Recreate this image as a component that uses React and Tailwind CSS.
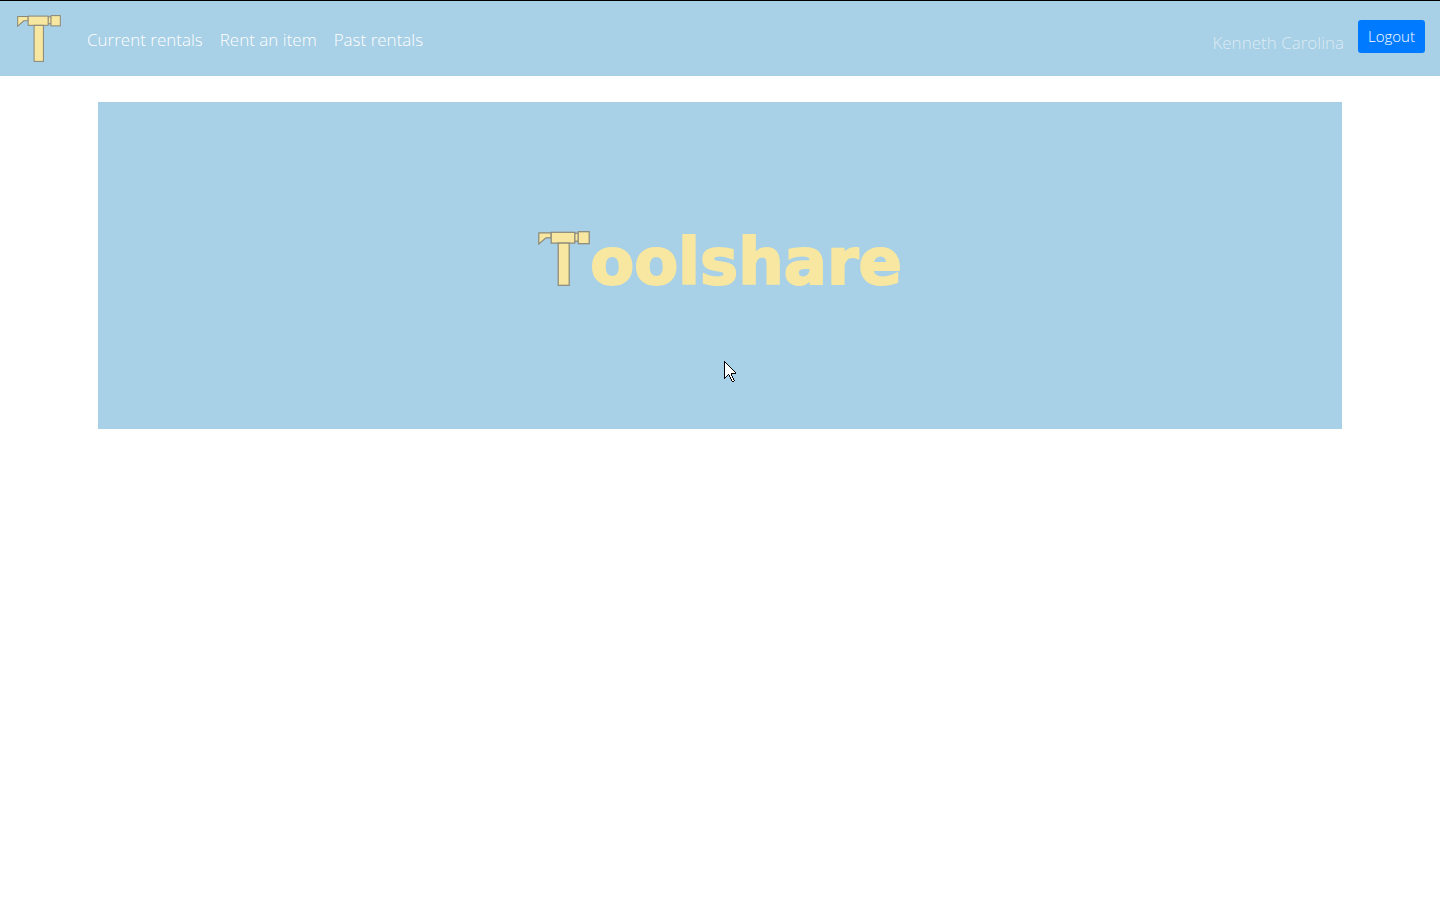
function Hammer({ className }) {
  return (
    <svg viewBox="0 0 52 55" className={className} fill="#f7e7a0" stroke="#8b8878" strokeWidth="1.2" strokeLinejoin="miter" preserveAspectRatio="none" aria-hidden="true">
      <path d="M0.8 1.8H13.2V6.8H8L0.8 13V1.8Z" />
      <rect x="36.5" y="2.2" width="4" height="8" />
      <rect x="13.2" y="1.3" width="23.6" height="10.8" />
      <rect x="40.2" y="0.7" width="11" height="12" />
      <rect x="20.2" y="12.1" width="11" height="42.2" />
    </svg>
  );
}

function Pointer({ className }) {
  return (
    <svg width="12" height="21" viewBox="0 0 12 21" className={className} shapeRendering="crispEdges" aria-hidden="true">
      <path fill="#000" d="M0 0h1v1h1v1h1v1h1v1h1v1h1v1h1v1h1v1h1v1h1v1h1v1h1v2H8v2h1v2h1v2h1v1h-1v1H8v-1H7v-2H6v-2H5v-2H4v1H3v1H2v1H1v1H0Z" />
      <path fill="#fff" d="M1 2h1v1h1v1h1v1h1v1h1v1h1v1h1v1h1v1h1v1h1v1H7v3h1v2h1v2h1v1H8v-2H7v-2H6v-2H5v-1H4v1H3v1H2v1H1Z" />
    </svg>
  );
}

const links = ["Current rentals", "Rent an item", "Past rentals"];

export default function App() {
  return (
    <div className="min-h-screen bg-white font-['Open_Sans','Noto_Sans',sans-serif] font-light">
      <header className="border-t border-black bg-[#a8d0e6]">
        <nav className="flex h-[75px] items-center px-[15px]">
          <a href="#home" aria-label="Toolshare" className="mr-[26px] ml-[2px]">
            <Hammer className="h-[47px] w-11" />
          </a>
          <div className="flex items-center gap-[17px] pt-[2px] text-[17px] leading-6 text-white">
            {links.map((label) => (
              <a key={label} href="#rentals">{label}</a>
            ))}
          </div>
          <div className="ml-auto flex items-center gap-[14px] pb-1">
            <span className="pt-3 text-[17px] leading-6 text-white/60">Kenneth Carolina</span>
            <button type="button" className="h-[33px] rounded-[3px] bg-[#007bff] px-[10px] text-[15px] text-white">Logout</button>
          </div>
        </nav>
      </header>
      <main className="px-[98px] pt-[26px]">
        <section className="relative flex h-[327px] items-center justify-center bg-[#a8d0e6] pb-2">
          <h1 className="flex items-start">
            <Hammer className="h-[55px] w-[52px]" />
            <span className="font-['DejaVu_Sans',sans-serif] text-[64px] leading-[62px] font-bold text-[#f7e7a0] [-webkit-text-stroke:2px_#f7e7a0]">oolshare</span>
          </h1>
          <Pointer className="absolute top-[259px] left-1/2 ml-1" />
        </section>
      </main>
    </div>
  );
}
